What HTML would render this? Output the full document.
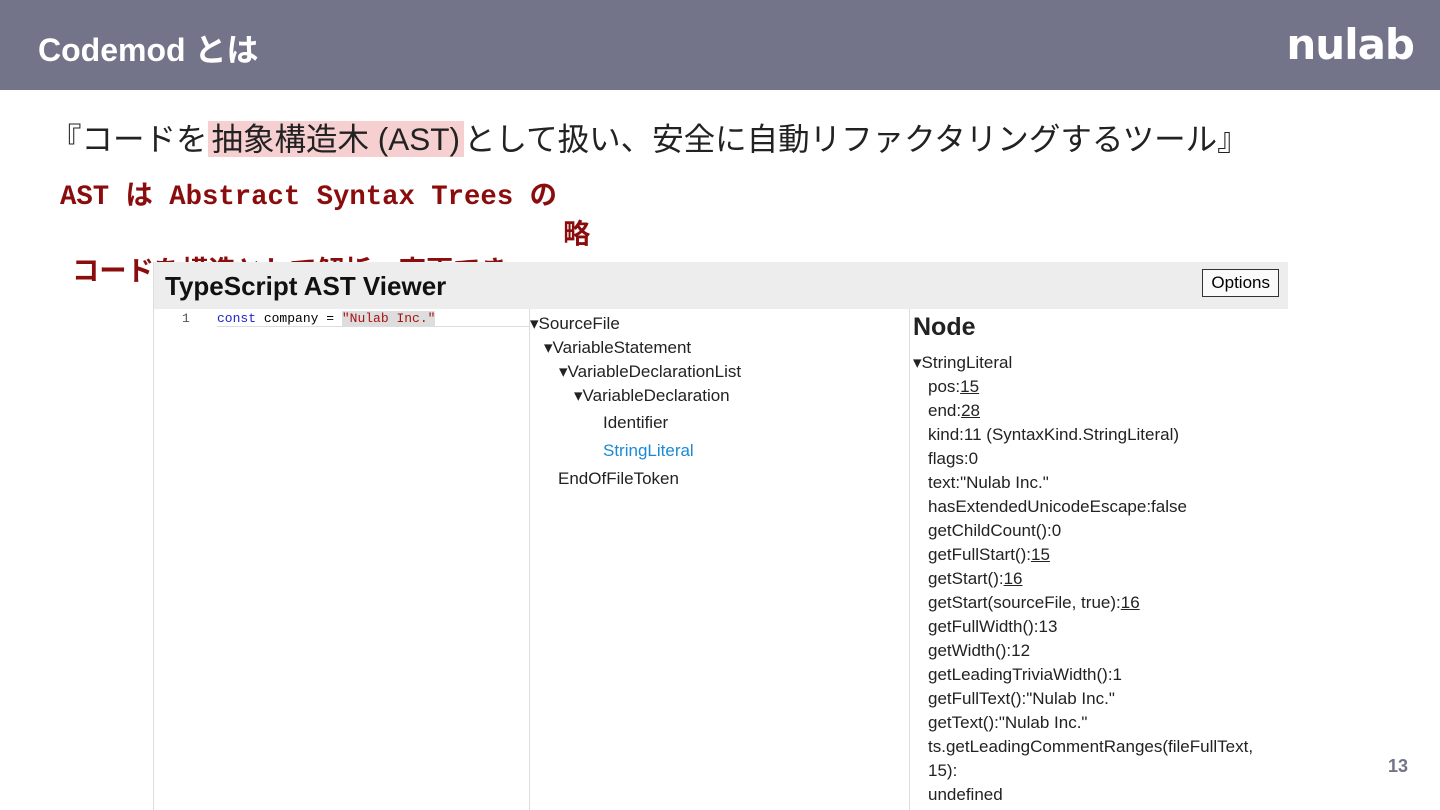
<!DOCTYPE html><html><head><meta charset="utf-8"><style>
body{margin:0;width:1440px;height:810px;overflow:hidden;background:#fff;position:relative;font-family:"Liberation Sans","Noto Sans CJK JP",sans-serif}
.hd{position:absolute;left:0;top:0;width:1440px;height:90px;background:#737389}
.hd .t{position:absolute;left:38px;top:25px;color:#fff;font-size:32px;font-weight:bold}
.hd .l{position:absolute;right:26px;top:20px;color:#fff;font-size:42px;font-weight:bold;font-family:"DejaVu Sans",sans-serif;letter-spacing:-1px}
.q{position:absolute;left:50px;top:114px;font-size:31.5px;color:#222;white-space:nowrap}
.q .h{background:#f6cfd0;padding:0 4px}
.r{position:absolute;color:#8b0c0c;font-family:"Liberation Mono","Noto Sans CJK JP",monospace;font-size:27.3px;font-weight:bold;white-space:nowrap}
.v{position:absolute;left:153px;top:262px;width:1134px;height:548px;background:#fff;border-left:1px solid #ddd}
.vt{height:47px;background:#ededed;position:relative}
.vt b{position:absolute;left:11px;top:9px;font-size:26px;color:#111}
.op{position:absolute;right:9px;top:7px;border:1px solid #333;font-size:17px;padding:3px 8px;background:#fafafa}
.ed{position:absolute;left:0;top:47px;width:375px;height:501px;border-right:1px solid #ddd}
.tr{position:absolute;left:376px;top:47px;width:379px;height:501px;border-right:1px solid #ddd;font-size:17px;color:#222}
.nd{position:absolute;left:756px;top:47px;width:378px;font-size:17px;color:#222}
.tr div,.nd div{position:absolute;white-space:nowrap}
u{text-decoration:underline}
.pg{position:absolute;left:1388px;top:756px;color:#737389;font-size:18px;font-weight:bold}
</style></head><body>
<div class="hd"><div class="t">Codemod とは</div><div class="l">nulab</div></div>
<div class="q">『コードを<span class="h">抽象構造木 (AST)</span>として扱い、安全に自動リファクタリングするツール』</div>
<div class="r" style="left:60px;top:172px">AST は Abstract Syntax Trees の</div>
<div class="r" style="left:563px;top:211px">略</div>
<div class="r" style="left:72px;top:248px">コードを構造として解析・変更でき</div>
<div class="v">
<div class="vt"><b>TypeScript AST Viewer</b><span class="op">Options</span></div>
<div class="ed"><div style="position:absolute;left:28px;top:2px;font:13px 'Liberation Mono',monospace;color:#237"><span style="color:#555">1</span></div>
<div style="position:absolute;left:63px;top:2px;font:13px 'Liberation Mono',monospace;white-space:nowrap;border-bottom:1px solid #ddd;width:312px"><span style="color:#22c">const</span> company = <span style="color:#a11;background:#ddd">"Nulab Inc."</span></div></div>
<div class="tr">
<div style="left:0;top:5px">▾SourceFile</div>
<div style="left:14px;top:29px">▾VariableStatement</div>
<div style="left:29px;top:53px">▾VariableDeclarationList</div>
<div style="left:44px;top:77px">▾VariableDeclaration</div>
<div style="left:73px;top:104px">Identifier</div>
<div style="left:73px;top:132px;color:#1a8ad6">StringLiteral</div>
<div style="left:28px;top:160px">EndOfFileToken</div>
</div>
<div class="nd">
<div style="left:3px;top:4px;font-size:25px;font-weight:bold">Node</div>
<div style="left:3px;top:44px">▾StringLiteral</div>
<div style="left:18px;top:68px">pos:<u>15</u></div>
<div style="left:18px;top:92px">end:<u>28</u></div>
<div style="left:18px;top:116px">kind:11 (SyntaxKind.StringLiteral)</div>
<div style="left:18px;top:140px">flags:0</div>
<div style="left:18px;top:164px">text:"Nulab Inc."</div>
<div style="left:18px;top:188px">hasExtendedUnicodeEscape:false</div>
<div style="left:18px;top:212px">getChildCount():0</div>
<div style="left:18px;top:236px">getFullStart():<u>15</u></div>
<div style="left:18px;top:260px">getStart():<u>16</u></div>
<div style="left:18px;top:284px">getStart(sourceFile, true):<u>16</u></div>
<div style="left:18px;top:308px">getFullWidth():13</div>
<div style="left:18px;top:332px">getWidth():12</div>
<div style="left:18px;top:356px">getLeadingTriviaWidth():1</div>
<div style="left:18px;top:380px">getFullText():"Nulab Inc."</div>
<div style="left:18px;top:404px">getText():"Nulab Inc."</div>
<div style="left:18px;top:428px">ts.getLeadingCommentRanges(fileFullText,</div>
<div style="left:18px;top:452px">15):</div>
<div style="left:18px;top:476px">undefined</div>
</div>
</div>
<div class="pg">13</div>
</body></html>
